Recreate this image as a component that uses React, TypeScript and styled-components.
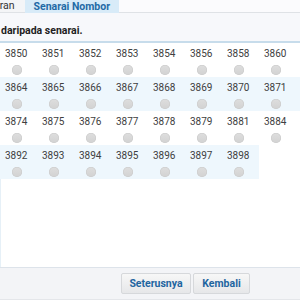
import React from "react";
import styled, { createGlobalStyle } from "styled-components";

const GlobalStyle = createGlobalStyle`
  html, body {
    margin: 0;
    padding: 0;
    background: #fff;
  }
  body {
    font-family: Roboto, "Noto Sans", Arial, sans-serif;
    width: 300px;
    height: 300px;
    overflow: hidden;
  }
`;

const Page = styled.div`
  display: flex;
  flex-direction: column;
  width: 300px;
  height: 300px;
  overflow: hidden;
`;

const TabBar = styled.div`
  display: flex;
  flex-shrink: 0;
  height: 12px;
  background: #fbfbfd;
  border-bottom: 1px solid #dfe2e6;
`;

const Tab = styled.div<{ $active?: boolean }>`
  display: flex;
  align-items: center;
  padding: ${(p) => (p.$active ? "0 9px" : "0 10px 0 0")};
  margin-left: ${(p) => (p.$active ? "0" : "-6px")};
  background: ${(p) => (p.$active ? "#d8ebf8" : "#f4f5f7")};
  color: ${(p) => (p.$active ? "#1f6aa6" : "#333")};
  font-size: 10.5px;
  font-weight: ${(p) => (p.$active ? 700 : 400)};
  line-height: 12px;
  white-space: nowrap;
  height: ${(p) => (p.$active ? "13px" : "12px")};
`;

const Intro = styled.div`
  display: flex;
  flex-shrink: 0;
  align-items: flex-end;
  height: 30px;
  padding: 0 0 4px 1px;
  box-sizing: border-box;
  background: #f7f8fb;
  border-bottom: 2px solid #c7dceb;
  color: #1e1e1e;
  font-size: 10.5px;
  font-weight: 700;
`;

const Grid = styled.div`
  display: grid;
  flex-shrink: 0;
  grid-template-columns: repeat(7, 37px) 1fr;
`;

const Cell = styled.div<{ $alt?: boolean }>`
  display: flex;
  flex-direction: column;
  height: 34px;
  padding: 5px 0 0 5px;
  box-sizing: border-box;
  background: ${(p) => (p.$alt ? "#eef7fd" : "#fff")};
`;

const Num = styled.span`
  font-size: 10px;
  line-height: 12px;
  color: #404040;
`;

const Radio = styled.span`
  width: 10px;
  height: 10px;
  margin: 5px 0 0 7px;
  border-radius: 50%;
  background: linear-gradient(#dedede, #d2d2d2);
  box-shadow: inset 0 0 0 0.5px #c8c8c8;
`;

const Filler = styled.div`
  flex: 1;
  background: #fff;
  border-left: 1px solid #e6f0f7;
`;

const Footer = styled.div`
  display: flex;
  flex-shrink: 0;
  justify-content: flex-end;
  align-items: center;
  gap: 2px;
  height: 33px;
  padding-right: 50px;
  background: #f3f4f7;
  border-top: 1px solid #dde3ea;
  border-bottom: 1px solid #e4e6ea;
  box-sizing: border-box;
`;

const Button = styled.button<{ $width: number }>`
  width: ${(p) => p.$width}px;
  height: 21px;
  padding: 0;
  border: 1px solid #d6d8db;
  border-radius: 2px;
  background: linear-gradient(#f7f7f7, #e6e7e9);
  color: #1f65a0;
  font-family: Roboto, "Noto Sans", Arial, sans-serif;
  font-size: 10.5px;
  font-weight: 700;
`;

const rows: string[][] = [
  ["3850", "3851", "3852", "3853", "3854", "3856", "3858", "3860"],
  ["3864", "3865", "3866", "3867", "3868", "3869", "3870", "3871"],
  ["3874", "3875", "3876", "3877", "3878", "3879", "3881", "3884"],
  ["3892", "3893", "3894", "3895", "3896", "3897", "3898"],
];

export default function App() {
  return (
    <Page>
      <GlobalStyle />
      <TabBar>
        <Tab>aran</Tab>
        <Tab $active>Senarai Nombor</Tab>
      </TabBar>
      <Intro>daripada senarai.</Intro>
      <Grid>
        {rows.map((row, r) =>
          row.map((n) => (
            <Cell key={n} $alt={r % 2 === 1}>
              <Num>{n}</Num>
              <Radio />
            </Cell>
          ))
        )}
      </Grid>
      <Filler />
      <Footer>
        <Button $width={70}>Seterusnya</Button>
        <Button $width={57}>Kembali</Button>
      </Footer>
    </Page>
  );
}
